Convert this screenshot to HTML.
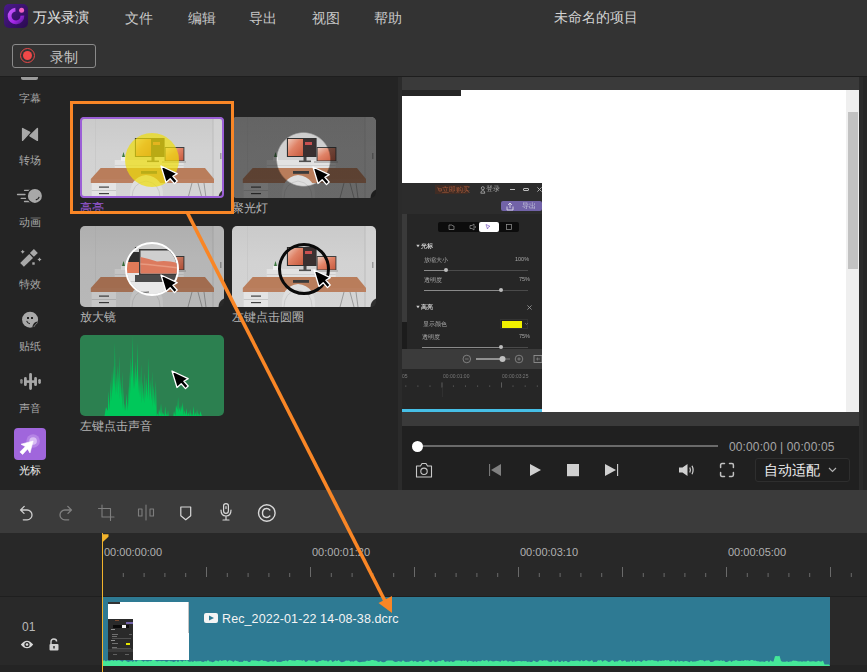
<!DOCTYPE html>
<html><head><meta charset="utf-8">
<style>
*{margin:0;padding:0;box-sizing:border-box}
html,body{width:867px;height:672px;overflow:hidden;background:#242424;font-family:"Liberation Sans",sans-serif}
.a{position:absolute}
.t{position:absolute;white-space:nowrap;line-height:1}
</style></head><body>
<!-- title bar -->
<div class="a" style="left:0;top:0;width:867px;height:76px;background:#333333"></div>
<div class="a" style="left:0;top:76px;width:867px;height:1px;background:#1e1e1e"></div>
<!-- logo -->
<div class="a" style="left:4px;top:4px;width:24px;height:24px;border-radius:5px;background:linear-gradient(135deg,#4a1a8a,#2a0a50)"></div>
<svg class="a" style="left:4px;top:4px" width="24" height="24" viewBox="0 0 24 24">
<defs><linearGradient id="lg" x1="0" y1="0" x2="1" y2="1"><stop offset="0" stop-color="#c45cfa"/><stop offset="0.65" stop-color="#a324e6"/><stop offset="1" stop-color="#5e1c9c"/></linearGradient></defs>
<path d="M11.44 5.62 A6.4 6.4 0 1 0 18.4 11.6" fill="none" stroke="url(#lg)" stroke-width="3.8"/>
<circle cx="17.6" cy="6.3" r="2.5" fill="#f062c0"/>
</svg>
<div class="t" style="left:33px;top:10px;font-size:14px;color:#e6e6e6">万兴录演</div>
<div class="t" style="left:125px;top:11px;font-size:14px;color:#c8c8c8">文件</div>
<div class="t" style="left:188px;top:11px;font-size:14px;color:#c8c8c8">编辑</div>
<div class="t" style="left:249px;top:11px;font-size:14px;color:#c8c8c8">导出</div>
<div class="t" style="left:312px;top:11px;font-size:14px;color:#c8c8c8">视图</div>
<div class="t" style="left:374px;top:11px;font-size:14px;color:#c8c8c8">帮助</div>
<div class="t" style="left:554px;top:10px;font-size:14px;color:#d2d2d2">未命名的项目</div>
<!-- record btn -->
<div class="a" style="left:12px;top:44px;width:84px;height:24px;border:1px solid #8a8a8a;border-radius:3px"></div>
<div class="a" style="left:19.8px;top:48.3px;width:15px;height:15px;border-radius:50%;border:1.3px solid #e84848"></div>
<div class="a" style="left:22.6px;top:51.1px;width:9.4px;height:9.4px;border-radius:50%;background:#f04848"></div>
<div class="t" style="left:50px;top:50px;font-size:14px;color:#c8c8c8">录制</div>


<!-- left panel -->
<div class="a" style="left:0;top:77px;width:398px;height:413px;background:#242424"></div>
<div class="a" style="left:398px;top:77px;width:4px;height:413px;background:#2b2b2b"></div>
<!-- sidebar -->
<div class="a" style="left:21px;top:77px;width:17px;height:3px;border-radius:0 0 2px 2px;background:#9a9a9a"></div>
<div class="t" style="left:19px;top:93px;font-size:11px;color:#a8a8a8">字幕</div>
<svg class="a" style="left:14px;top:120px" width="32" height="26" viewBox="0 0 32 26">
<g fill="#a8a8a8" stroke="#a8a8a8" stroke-width="1.4" stroke-linejoin="round">
<path d="M8.6 8.6 L8.6 20.4 L15.8 12.4Z"/><path d="M23.4 8.6 L23.4 20.4 L16 15.8Z"/>
</g></svg>
<div class="t" style="left:19px;top:155px;font-size:11px;color:#a8a8a8">转场</div>
<svg class="a" style="left:14px;top:182px" width="32" height="26" viewBox="0 0 32 26">
<g stroke="#a8a8a8" stroke-width="1.3" stroke-linecap="round">
<path d="M10.5 8.3 H17.5 M3.5 12.5 H11 M7.2 16.4 H11.5 M10.5 19.5 H17.5"/></g>
<circle cx="20.9" cy="13.9" r="8.2" fill="#242424"/>
<circle cx="20.9" cy="13.9" r="7" fill="#a8a8a8"/>
<path d="M25.2 14.8 Q24.6 17.2 21.8 17.8" stroke="#242424" stroke-width="1.2" fill="none"/>
</svg>
<div class="t" style="left:19px;top:217px;font-size:11px;color:#a8a8a8">动画</div>
<svg class="a" style="left:14px;top:244px" width="32" height="26" viewBox="0 0 32 26">
<g fill="#a8a8a8">
<path d="M6.2 19 L15.3 9.9 L19 13.9 L9.9 22.8Z"/>
<path d="M15.9 9.1 L19.9 5 L23.8 9.1 L19.9 12.8Z"/>
<path d="M8.7 5.7 L9.5 7 L10.8 7.7 L9.5 8.4 L8.7 9.7 L7.9 8.4 L6.6 7.7 L7.9 7Z"/>
<path d="M25.5 13.5 L26.3 14.8 L27.6 15.5 L26.3 16.2 L25.5 17.5 L24.7 16.2 L23.4 15.5 L24.7 14.8Z"/>
<rect x="18.3" y="18.3" width="2.4" height="2.4"/>
</g></svg>
<div class="t" style="left:19px;top:279px;font-size:11px;color:#a8a8a8">特效</div>
<svg class="a" style="left:14px;top:306px" width="32" height="26" viewBox="0 0 32 26">
<circle cx="16.06" cy="13.7" r="8" fill="#a8a8a8"/>
<rect x="13" y="11" width="2" height="2" fill="#242424"/>
<rect x="17" y="11" width="2" height="2" fill="#242424"/>
<path d="M12.6 14.9 Q13.5 17.2 15.9 17.8" stroke="#242424" stroke-width="1.1" fill="none"/>
<path d="M23.6 15.6 Q19.3 16.2 18.3 20.8 L19.6 21.4 Q22.8 20.3 23.8 16.8Z" fill="#242424"/><path d="M23.6 16.6 Q21 18.5 19.8 21" stroke="#9a9a9a" stroke-width="0.7" fill="none"/>
</svg>
<div class="t" style="left:19px;top:341px;font-size:11px;color:#a8a8a8">贴纸</div>
<svg class="a" style="left:14px;top:368px" width="32" height="26" viewBox="0 0 32 26">
<g stroke="#a8a8a8" stroke-linecap="round">
<path d="M7.45 12.3 V14.6" stroke-width="2.5" stroke="#8a8a8a"/>
<path d="M11.4 10.4 V16.7 M16.55 6.3 V20.5 M21.55 10.4 V16.7" stroke-width="2.8"/>
<path d="M25.55 12.3 V14.6" stroke-width="2.6"/>
<path d="M11.5 13.6 H21.5" stroke-width="2.6" stroke-linecap="butt"/>
</g></svg>
<div class="t" style="left:19px;top:403px;font-size:11px;color:#a8a8a8">声音</div>
<div class="a" style="left:14px;top:428px;width:32px;height:32px;border-radius:4px;background:#a066dc"></div>
<svg class="a" style="left:14px;top:428px" width="32" height="32" viewBox="0 0 32 32">
<circle cx="19.1" cy="13" r="6.8" fill="#c9a2ef" opacity="0.5"/>
<circle cx="19.1" cy="13" r="3.8" fill="#e4d0f8" opacity="0.75"/>
<path d="M19.1 13 L7 16.2 L11.3 18.6 L5.9 23.9 L8.6 26.5 L13.6 21 L16 25Z" fill="#ffffff" stroke="#fff" stroke-width="0.6" stroke-linejoin="round"/>
</svg>
<div class="t" style="left:19px;top:465px;font-size:11px;color:#f0f0f0">光标</div>

<div class="a" style="left:80px;top:117px;width:144px;height:81px;border-radius:5px;overflow:hidden"><svg width="144" height="81" viewBox="0 0 144 81" style="position:absolute;left:0;top:0;filter:blur(0.3px)">
<defs><linearGradient id="wl1" x1="0" x2="0" y1="0" y2="1"><stop offset="0" stop-color="#cacaca"/><stop offset="0.45" stop-color="#d2d2d2"/><stop offset="1" stop-color="#d4d4d4"/></linearGradient>
<linearGradient id="scr1" x1="0" x2="1" y1="0" y2="1"><stop offset="0" stop-color="#eecabb"/><stop offset="0.45" stop-color="#e08266"/><stop offset="1" stop-color="#c85a3e"/></linearGradient></defs>
<rect width="144" height="81" fill="url(#wl1)"/>
<rect x="15" y="0" width="0.8" height="81" fill="#c0c0c0" opacity="0.6"/>
<rect x="133" y="0" width="11" height="81" fill="#d6d6d6" opacity="0.6"/>
<rect x="132.5" y="0" width="1" height="81" fill="#bcbcbc"/>
<rect x="140" y="36" width="1.5" height="6" fill="#9a9a9a"/>
<rect x="34.7" y="43" width="69" height="11" fill="#e2e2e2"/>
<rect x="34.7" y="48" width="69" height="1" fill="#cfcfcf"/>
<rect x="54.9" y="21" width="29.7" height="19" fill="#303030"/>
<rect x="56" y="22" width="15" height="17" fill="url(#scr1)"/>
<rect x="71" y="22" width="12.6" height="17" fill="#3a3030"/>
<rect x="73" y="25" width="7" height="3" fill="#c85050"/>
<rect x="71.5" y="40" width="3" height="4" fill="#454545"/>
<rect x="67" y="43.5" width="12" height="1.6" fill="#505050"/>
<rect x="84.6" y="30" width="19.8" height="14" fill="#404040"/>
<rect x="85.6" y="31" width="17.8" height="12.5" fill="url(#scr1)"/>
<rect x="82" y="44" width="24" height="2" fill="#b8b8b8"/>
<rect x="41" y="40" width="5" height="4" fill="#eeeeee"/>
<path d="M42 40 L43.5 35 L45 40Z" fill="#3d7a40"/>
<path d="M20.7 51 L125 51 L134 62 L10.8 62Z" fill="#b97d5b"/>
<rect x="10.8" y="62" width="123.2" height="4" fill="#bb8060"/>
<rect x="61" y="54" width="16" height="2.8" fill="#3a3a3a"/>
<rect x="11.7" y="66" width="24.3" height="15" fill="#e4e4e4"/>
<rect x="19" y="69.5" width="10" height="1.2" fill="#404040"/>
<rect x="19" y="76" width="10" height="1.2" fill="#404040"/>
<rect x="11.7" y="73" width="24.3" height="0.8" fill="#c0c0c0"/>
<path d="M50 81 Q49 60 66 58 Q84 60 83 81Z" fill="#dedede"/><path d="M52 81 Q52 66 66 64 Q80 66 80 81" fill="none" stroke="#c4c4c4" stroke-width="0.8"/>
<path d="M112 66 L108 81 M118 66 L122 81 M124 66 L126 81" stroke="#9a9a9a" stroke-width="1"/><path d="M138.5 81 Q138.5 75 144 72.5 V81Z" fill="#2e2e2e"/>
</svg><div class="a" style="left:45px;top:15.5px;width:54px;height:54px;border-radius:50%;background:rgba(240,222,10,0.7)"></div><svg class="a" style="left:79px;top:47px" width="22" height="23" viewBox="-2 -2 22 23">
<path transform="scale(1.0)" d="M0 0 L5 16.5 L9.2 12.8 L13.5 17.6 L16.2 15 L11.9 10.3 L16.2 7.6Z" fill="#000" stroke="#fff" stroke-width="1.3" stroke-linejoin="round"/></svg></div><div class="a" style="left:80px;top:117px;width:144px;height:81px;border:2px solid #9b5fd6;border-radius:4px"></div>
<div class="t" style="left:80px;top:202px;font-size:12px;color:#9a5ad8">高亮</div><div class="a" style="left:232px;top:117px;width:144px;height:81px;border-radius:5px;overflow:hidden"><svg width="144" height="81" viewBox="0 0 144 81" style="position:absolute;left:0;top:0;filter:blur(0.3px)">
<defs><linearGradient id="wl2" x1="0" x2="0" y1="0" y2="1"><stop offset="0" stop-color="#cacaca"/><stop offset="0.45" stop-color="#d2d2d2"/><stop offset="1" stop-color="#d4d4d4"/></linearGradient>
<linearGradient id="scr2" x1="0" x2="1" y1="0" y2="1"><stop offset="0" stop-color="#eecabb"/><stop offset="0.45" stop-color="#e08266"/><stop offset="1" stop-color="#c85a3e"/></linearGradient></defs>
<rect width="144" height="81" fill="url(#wl2)"/>
<rect x="15" y="0" width="0.8" height="81" fill="#c0c0c0" opacity="0.6"/>
<rect x="133" y="0" width="11" height="81" fill="#d6d6d6" opacity="0.6"/>
<rect x="132.5" y="0" width="1" height="81" fill="#bcbcbc"/>
<rect x="140" y="36" width="1.5" height="6" fill="#9a9a9a"/>
<rect x="34.7" y="43" width="69" height="11" fill="#e2e2e2"/>
<rect x="34.7" y="48" width="69" height="1" fill="#cfcfcf"/>
<rect x="54.9" y="21" width="29.7" height="19" fill="#303030"/>
<rect x="56" y="22" width="15" height="17" fill="url(#scr2)"/>
<rect x="71" y="22" width="12.6" height="17" fill="#3a3030"/>
<rect x="73" y="25" width="7" height="3" fill="#c85050"/>
<rect x="71.5" y="40" width="3" height="4" fill="#454545"/>
<rect x="67" y="43.5" width="12" height="1.6" fill="#505050"/>
<rect x="84.6" y="30" width="19.8" height="14" fill="#404040"/>
<rect x="85.6" y="31" width="17.8" height="12.5" fill="url(#scr2)"/>
<rect x="82" y="44" width="24" height="2" fill="#b8b8b8"/>
<rect x="41" y="40" width="5" height="4" fill="#eeeeee"/>
<path d="M42 40 L43.5 35 L45 40Z" fill="#3d7a40"/>
<path d="M20.7 51 L125 51 L134 62 L10.8 62Z" fill="#b97d5b"/>
<rect x="10.8" y="62" width="123.2" height="4" fill="#bb8060"/>
<rect x="61" y="54" width="16" height="2.8" fill="#3a3a3a"/>
<rect x="11.7" y="66" width="24.3" height="15" fill="#e4e4e4"/>
<rect x="19" y="69.5" width="10" height="1.2" fill="#404040"/>
<rect x="19" y="76" width="10" height="1.2" fill="#404040"/>
<rect x="11.7" y="73" width="24.3" height="0.8" fill="#c0c0c0"/>
<path d="M50 81 Q49 60 66 58 Q84 60 83 81Z" fill="#dedede"/><path d="M52 81 Q52 66 66 64 Q80 66 80 81" fill="none" stroke="#c4c4c4" stroke-width="0.8"/>
<path d="M112 66 L108 81 M118 66 L122 81 M124 66 L126 81" stroke="#9a9a9a" stroke-width="1"/><path d="M138.5 81 Q138.5 75 144 72.5 V81Z" fill="#2e2e2e"/>
</svg><div class="a" style="left:0;top:0;width:144px;height:81px;background:radial-gradient(circle 27px at 71.5px 42.4px, rgba(0,0,0,0) 26px, rgba(16,16,16,0.55) 27.5px)"></div><svg class="a" style="left:79px;top:48px" width="22" height="23" viewBox="-2 -2 22 23">
<path transform="scale(1.0)" d="M0 0 L5 16.5 L9.2 12.8 L13.5 17.6 L16.2 15 L11.9 10.3 L16.2 7.6Z" fill="#000" stroke="#fff" stroke-width="1.3" stroke-linejoin="round"/></svg></div>
<div class="t" style="left:232px;top:202px;font-size:12px;color:#b4b4b4">聚光灯</div><div class="a" style="left:80px;top:226px;width:144px;height:81px;border-radius:5px;overflow:hidden"><svg width="144" height="81" viewBox="0 0 144 81" style="position:absolute;left:0;top:0;filter:blur(0.3px)">
<defs><linearGradient id="wl3" x1="0" x2="0" y1="0" y2="1"><stop offset="0" stop-color="#cacaca"/><stop offset="0.45" stop-color="#d2d2d2"/><stop offset="1" stop-color="#d4d4d4"/></linearGradient>
<linearGradient id="scr3" x1="0" x2="1" y1="0" y2="1"><stop offset="0" stop-color="#eecabb"/><stop offset="0.45" stop-color="#e08266"/><stop offset="1" stop-color="#c85a3e"/></linearGradient></defs>
<rect width="144" height="81" fill="url(#wl3)"/>
<rect x="15" y="0" width="0.8" height="81" fill="#c0c0c0" opacity="0.6"/>
<rect x="133" y="0" width="11" height="81" fill="#d6d6d6" opacity="0.6"/>
<rect x="132.5" y="0" width="1" height="81" fill="#bcbcbc"/>
<rect x="140" y="36" width="1.5" height="6" fill="#9a9a9a"/>
<rect x="34.7" y="43" width="69" height="11" fill="#e2e2e2"/>
<rect x="34.7" y="48" width="69" height="1" fill="#cfcfcf"/>
<rect x="54.9" y="21" width="29.7" height="19" fill="#303030"/>
<rect x="56" y="22" width="15" height="17" fill="url(#scr3)"/>
<rect x="71" y="22" width="12.6" height="17" fill="#3a3030"/>
<rect x="73" y="25" width="7" height="3" fill="#c85050"/>
<rect x="71.5" y="40" width="3" height="4" fill="#454545"/>
<rect x="67" y="43.5" width="12" height="1.6" fill="#505050"/>
<rect x="84.6" y="30" width="19.8" height="14" fill="#404040"/>
<rect x="85.6" y="31" width="17.8" height="12.5" fill="url(#scr3)"/>
<rect x="82" y="44" width="24" height="2" fill="#b8b8b8"/>
<rect x="41" y="40" width="5" height="4" fill="#eeeeee"/>
<path d="M42 40 L43.5 35 L45 40Z" fill="#3d7a40"/>
<path d="M20.7 51 L125 51 L134 62 L10.8 62Z" fill="#b97d5b"/>
<rect x="10.8" y="62" width="123.2" height="4" fill="#bb8060"/>
<rect x="61" y="54" width="16" height="2.8" fill="#3a3a3a"/>
<rect x="11.7" y="66" width="24.3" height="15" fill="#e4e4e4"/>
<rect x="19" y="69.5" width="10" height="1.2" fill="#404040"/>
<rect x="19" y="76" width="10" height="1.2" fill="#404040"/>
<rect x="11.7" y="73" width="24.3" height="0.8" fill="#c0c0c0"/>
<path d="M50 81 Q49 60 66 58 Q84 60 83 81Z" fill="#dedede"/><path d="M52 81 Q52 66 66 64 Q80 66 80 81" fill="none" stroke="#c4c4c4" stroke-width="0.8"/>
<path d="M112 66 L108 81 M118 66 L122 81 M124 66 L126 81" stroke="#9a9a9a" stroke-width="1"/><path d="M138.5 81 Q138.5 75 144 72.5 V81Z" fill="#2e2e2e"/>
</svg><div class="a" style="left:0;top:0;width:144px;height:81px;background:rgba(0,0,0,0.13)"></div><div class="a" style="left:45px;top:15.7px;width:54px;height:54px;border-radius:50%;overflow:hidden;border:2px solid #fff;background:#cccccc"><svg class="a" style="left:-2px;top:-2px" width="54" height="54" viewBox="0 0 54 54"><rect x="0" y="10" width="14" height="10" fill="#2e2e2e"/><rect x="0" y="20" width="14" height="11" fill="#e07a58"/><rect x="0" y="31" width="14" height="8" fill="#e6e6e6"/><rect x="14" y="7" width="40" height="26" fill="#3a3a3a"/><rect x="15.5" y="8.5" width="38" height="23" fill="#cfcfcf"/><path d="M15.5 15 Q25 17 32 19.5 Q42 18 53.5 21 V31.5 H15.5Z" fill="#dc7a5e"/><path d="M15.5 22 Q30 23 53.5 26" stroke="#e89a80" stroke-width="1.5" fill="none"/><rect x="10" y="33" width="44" height="7" fill="#4a4a4a"/><rect x="0" y="40" width="54" height="14" fill="#e8e8e8"/><path d="M8 49 Q14 51 24 50" stroke="#555" stroke-width="1.2" fill="none"/><rect x="50" y="40" width="4" height="8" fill="#b98058"/></svg></div><svg class="a" style="left:79px;top:47px" width="22" height="23" viewBox="-2 -2 22 23">
<path transform="scale(1.0)" d="M0 0 L5 16.5 L9.2 12.8 L13.5 17.6 L16.2 15 L11.9 10.3 L16.2 7.6Z" fill="#000" stroke="#fff" stroke-width="1.3" stroke-linejoin="round"/></svg></div>
<div class="t" style="left:80px;top:311px;font-size:12px;color:#b4b4b4">放大镜</div><div class="a" style="left:232px;top:226px;width:144px;height:81px;border-radius:5px;overflow:hidden"><svg width="144" height="81" viewBox="0 0 144 81" style="position:absolute;left:0;top:0;filter:blur(0.3px)">
<defs><linearGradient id="wl4" x1="0" x2="0" y1="0" y2="1"><stop offset="0" stop-color="#cacaca"/><stop offset="0.45" stop-color="#d2d2d2"/><stop offset="1" stop-color="#d4d4d4"/></linearGradient>
<linearGradient id="scr4" x1="0" x2="1" y1="0" y2="1"><stop offset="0" stop-color="#eecabb"/><stop offset="0.45" stop-color="#e08266"/><stop offset="1" stop-color="#c85a3e"/></linearGradient></defs>
<rect width="144" height="81" fill="url(#wl4)"/>
<rect x="15" y="0" width="0.8" height="81" fill="#c0c0c0" opacity="0.6"/>
<rect x="133" y="0" width="11" height="81" fill="#d6d6d6" opacity="0.6"/>
<rect x="132.5" y="0" width="1" height="81" fill="#bcbcbc"/>
<rect x="140" y="36" width="1.5" height="6" fill="#9a9a9a"/>
<rect x="34.7" y="43" width="69" height="11" fill="#e2e2e2"/>
<rect x="34.7" y="48" width="69" height="1" fill="#cfcfcf"/>
<rect x="54.9" y="21" width="29.7" height="19" fill="#303030"/>
<rect x="56" y="22" width="15" height="17" fill="url(#scr4)"/>
<rect x="71" y="22" width="12.6" height="17" fill="#3a3030"/>
<rect x="73" y="25" width="7" height="3" fill="#c85050"/>
<rect x="71.5" y="40" width="3" height="4" fill="#454545"/>
<rect x="67" y="43.5" width="12" height="1.6" fill="#505050"/>
<rect x="84.6" y="30" width="19.8" height="14" fill="#404040"/>
<rect x="85.6" y="31" width="17.8" height="12.5" fill="url(#scr4)"/>
<rect x="82" y="44" width="24" height="2" fill="#b8b8b8"/>
<rect x="41" y="40" width="5" height="4" fill="#eeeeee"/>
<path d="M42 40 L43.5 35 L45 40Z" fill="#3d7a40"/>
<path d="M20.7 51 L125 51 L134 62 L10.8 62Z" fill="#b97d5b"/>
<rect x="10.8" y="62" width="123.2" height="4" fill="#bb8060"/>
<rect x="61" y="54" width="16" height="2.8" fill="#3a3a3a"/>
<rect x="11.7" y="66" width="24.3" height="15" fill="#e4e4e4"/>
<rect x="19" y="69.5" width="10" height="1.2" fill="#404040"/>
<rect x="19" y="76" width="10" height="1.2" fill="#404040"/>
<rect x="11.7" y="73" width="24.3" height="0.8" fill="#c0c0c0"/>
<path d="M50 81 Q49 60 66 58 Q84 60 83 81Z" fill="#dedede"/><path d="M52 81 Q52 66 66 64 Q80 66 80 81" fill="none" stroke="#c4c4c4" stroke-width="0.8"/>
<path d="M112 66 L108 81 M118 66 L122 81 M124 66 L126 81" stroke="#9a9a9a" stroke-width="1"/><path d="M138.5 81 Q138.5 75 144 72.5 V81Z" fill="#2e2e2e"/>
</svg><div class="a" style="left:45.8px;top:16.7px;width:52px;height:52px;border-radius:50%;border:3px solid #0a0a0a"></div><svg class="a" style="left:80px;top:41.5px" width="22" height="23" viewBox="-2 -2 22 23">
<path transform="scale(1.0)" d="M0 0 L5 16.5 L9.2 12.8 L13.5 17.6 L16.2 15 L11.9 10.3 L16.2 7.6Z" fill="#000" stroke="#fff" stroke-width="1.3" stroke-linejoin="round"/></svg></div>
<div class="t" style="left:232px;top:311px;font-size:12px;color:#b4b4b4">左键点击圆圈</div><div class="a" style="left:80px;top:335px;width:144px;height:81px;border-radius:5px;overflow:hidden"><div class="a" style="left:0;top:0;width:144px;height:81px;background:#2c8050"></div>
<svg class="a" style="left:0;top:0" width="144" height="81"><path d="M24.5 81 L25.3 76.0 L26.0 72.0 L27.8 76.0 L28.5 56.0 L29.8 76.0 L30.5 44.0 L31.3 66.0 L32.0 36.0 L32.8 58.0 L33.5 30.0 L34.2 52.0 L34.9 7.0 L35.6 60.0 L36.3 38.0 L37.1 60.0 L37.8 30.0 L38.5 52.0 L39.2 20.0 L39.9 64.0 L40.6 42.0 L41.5 64.0 L42.2 36.0 L42.8 74.0 L43.5 52.0 L44.0 76.0 L44.7 68.0 L45.6 76.0 L46.3 58.0 L47.6 76.0 L48.3 50.0 L48.9 72.0 L49.6 36.0 L50.1 58.0 L50.8 22.0 L51.9 44.0 L52.6 0.0 L53.3 54.0 L54.0 32.0 L54.9 54.0 L55.6 26.0 L56.8 48.0 L57.5 7.0 L58.3 58.0 L59.0 36.0 L59.3 62.0 L60.0 40.0 L60.4 62.0 L61.1 29.0 L61.9 68.0 L62.6 46.0 L64.1 68.0 L64.8 37.0 L65.8 64.0 L66.5 42.0 L67.7 64.0 L68.4 22.0 L69.3 66.0 L70.0 44.0 L71.4 66.0 L72.1 36.0 L72.9 72.0 L73.6 50.0 L75.1 72.0 L75.8 45.0 L76.8 81.0 L77.5 78.0 L78.3 81.0 L79.0 74.0 L80.3 79.0 L81.0 68.0 L81.9 81.0 L82.6 77.0 L84.5 81.0 L85.2 71.0 L86.1 81.0 L86.8 78.0 L87.3 81.0 L88.0 75.0 L88.7 81.0 L89.4 81.0 L91.3 81.0 L92.0 81.0 L93.3 81.0 L94.0 76.0 L95.3 81.0 L96.0 70.0 L97.4 75.0 L98.1 62.0 L98.8 77.0 L99.5 72.0 L100.3 77.0 L101.0 70.0 L102.0 75.0 L102.7 67.0 L103.8 80.0 L104.5 75.0 L105.7 80.0 L106.4 73.0 L107.5 81.0 L108.2 77.0 L109.4 81.0 L110.1 74.0 L111.1 81.0 L111.8 78.0 L112.7 81.0 L113.4 71.0 L114.5 81.0 L115.2 77.0 L116.3 81.0 L117.0 74.0 L118.0 81.0 L118.7 78.0 L119.6 81.0 L120.3 76.0 L121.9 81.0 L122.6 81.0 L123.5 81Z" fill="#00c85a"/></svg><svg class="a" style="left:89.5px;top:33.5px" width="22" height="23" viewBox="-2 -2 22 23">
<path transform="scale(1.0)" d="M0 0 L5 16.5 L9.2 12.8 L13.5 17.6 L16.2 15 L11.9 10.3 L16.2 7.6Z" fill="#000" stroke="#fff" stroke-width="1.3" stroke-linejoin="round"/></svg></div>
<div class="t" style="left:80px;top:420px;font-size:12px;color:#b4b4b4">左键点击声音</div>

<div class="a" style="left:402px;top:77px;width:457px;height:13px;background:#3a3a3a"></div>
<div class="a" style="left:859px;top:77px;width:8px;height:413px;background:#2b2b2b"></div><div class="a" style="left:863px;top:77px;width:4px;height:413px;background:#262626"></div>
<div class="a" style="left:402px;top:90px;width:457px;height:322px;background:#ffffff"></div>
<div class="a" style="left:402px;top:90px;width:59px;height:6px;background:#262626"></div>
<div class="a" style="left:846px;top:90px;width:13px;height:322px;background:#efefef"></div>
<div class="a" style="left:848px;top:112px;width:10px;height:157px;background:#c2c2c2"></div>
<div class="a" style="left:402px;top:412px;width:457px;height:14px;background:#3a3a3a"></div>
<!-- embedded window --><div class="a" style="left:0;top:0;width:867px;height:672px;filter:blur(0.35px)">
<div class="a" style="left:402px;top:183px;width:140px;height:31px;background:#2c2c2c"></div>
<div class="a" style="left:435px;top:185px;width:33px;height:9px;background:#402c24"></div>
<svg class="a" style="left:436.5px;top:186.5px" width="5" height="6"><path d="M0.3 0.8 H1.2 L2 4 H4.3 L4.7 1.8 H1.6" fill="none" stroke="#b0603c" stroke-width="0.6"/></svg><div class="t" style="left:442px;top:186.5px;font-size:6.5px;color:#a85a3a">立即购买</div>
<svg class="a" style="left:479.5px;top:186px" width="6" height="8"><circle cx="2.8" cy="2.2" r="1.5" fill="none" stroke="#b4b4b4" stroke-width="0.8"/><path d="M0.8 7.2 Q0.8 4.6 2.8 4.6 Q4.8 4.6 4.8 7.2Z" fill="none" stroke="#b4b4b4" stroke-width="0.8"/></svg>
<div class="t" style="left:486px;top:186px;font-size:6.5px;color:#a8a8a8">登录</div>
<div class="a" style="left:510px;top:188.5px;width:5px;height:1px;background:#bdbdbd"></div>
<div class="a" style="left:523px;top:187.5px;width:5.5px;height:3.5px;border:1px solid #bdbdbd;border-radius:1px"></div>
<svg class="a" style="left:536.5px;top:186.5px" width="5" height="5"><path d="M0.4 0.4 L4.6 4.6 M4.6 0.4 L0.4 4.6" stroke="#bdbdbd" stroke-width="0.9"/></svg>
<div class="a" style="left:501px;top:200.5px;width:40.5px;height:10.5px;background:#7263a8;border-radius:2px"></div>
<svg class="a" style="left:506px;top:201.5px" width="8" height="9"><path d="M4 6 V1 M2 3 L4 1 L6 3 M1 4.5 V8 H7 V4.5" fill="none" stroke="#e8e8f0" stroke-width="0.8"/></svg>
<div class="t" style="left:522px;top:202px;font-size:7px;color:#c8c8dc">导出</div>
<div class="a" style="left:402px;top:214px;width:140px;height:135px;background:#262626"></div>
<div class="a" style="left:402px;top:214px;width:5px;height:108px;background:#3a3a3a"></div>
<div class="a" style="left:402px;top:322px;width:5px;height:27px;background:#1c1c1c"></div>
<div class="a" style="left:438px;top:222px;width:81px;height:10px;background:#0c0c0c;border-radius:2px"></div>
<div class="a" style="left:479px;top:222px;width:20px;height:10px;background:#ffffff;border-radius:2px"></div>
<svg class="a" style="left:438px;top:222px" width="81" height="10">
<path d="M11 3 H14 L15 4 H16 V7.5 H11Z" fill="none" stroke="#9a9a9a" stroke-width="0.7"/>
<path d="M32 3.5 H34 L36 2 V8 L34 6.5 H32Z M37 4 Q38 5 37 6" fill="none" stroke="#9a9a9a" stroke-width="0.7"/>
<path d="M48 2.5 L52 4.3 L50.3 5 L49.5 7Z" fill="none" stroke="#8060c0" stroke-width="0.7"/>
<rect x="68.5" y="2.5" width="5" height="5" fill="none" stroke="#9a9a9a" stroke-width="0.7"/>
</svg>
<svg class="a" style="left:416px;top:244px" width="4" height="4"><path d="M0.3 0.8 H3.7 L2 3.3Z" fill="#cfcfcf"/></svg>
<div class="t" style="left:421px;top:243px;font-size:6px;color:#d0d0d0;font-weight:bold">光标</div>
<div class="t" style="left:424px;top:257px;font-size:6px;color:#a8a8a8">放缩大小</div>
<div class="t" style="left:515px;top:257px;font-size:5.5px;color:#a8a8a8">100%</div>
<div class="a" style="left:424px;top:269.5px;width:104px;height:1px;background:#4a4a4a"></div>
<div class="a" style="left:424px;top:269.5px;width:22px;height:1px;background:#8a8a8a"></div>
<div class="a" style="left:443.5px;top:267.8px;width:4.5px;height:4.5px;border-radius:50%;background:#bdbdbd"></div>
<div class="t" style="left:424px;top:277px;font-size:6px;color:#a8a8a8">透明度</div>
<div class="t" style="left:519px;top:277px;font-size:5.5px;color:#a8a8a8">75%</div>
<div class="a" style="left:424px;top:289.5px;width:104px;height:1px;background:#4a4a4a"></div>
<div class="a" style="left:424px;top:289.5px;width:77px;height:1px;background:#8a8a8a"></div>
<div class="a" style="left:498.8px;top:287.7px;width:4.5px;height:4.5px;border-radius:50%;background:#bdbdbd"></div>
<svg class="a" style="left:416px;top:305px" width="4" height="4"><path d="M0.3 0.8 H3.7 L2 3.3Z" fill="#cfcfcf"/></svg>
<div class="t" style="left:421px;top:304px;font-size:6px;color:#d0d0d0;font-weight:bold">高亮</div>
<svg class="a" style="left:527px;top:304.5px" width="5" height="5"><path d="M0.4 0.4 L4.6 4.6 M4.6 0.4 L0.4 4.6" stroke="#a0a0a0" stroke-width="0.8"/></svg>
<div class="t" style="left:423px;top:321px;font-size:6px;color:#a8a8a8">显示颜色</div>
<div class="a" style="left:500px;top:319px;width:28px;height:10px;border:0.5px solid #333"></div>
<div class="a" style="left:502px;top:320.5px;width:20px;height:7px;background:#f2f200"></div>
<svg class="a" style="left:524.5px;top:323px" width="3" height="2"><path d="M0 0 L1.5 1.5 L3 0" fill="none" stroke="#8a8a8a" stroke-width="0.6"/></svg>
<div class="t" style="left:422px;top:334px;font-size:6px;color:#a8a8a8">透明度</div>
<div class="t" style="left:519px;top:334px;font-size:5.5px;color:#a8a8a8">75%</div>
<div class="a" style="left:422px;top:346.5px;width:106px;height:1px;background:#4a4a4a"></div>
<div class="a" style="left:422px;top:346.5px;width:79px;height:1px;background:#8a8a8a"></div>
<div class="a" style="left:498.8px;top:344.7px;width:4.5px;height:4.5px;border-radius:50%;background:#bdbdbd"></div>
<div class="a" style="left:402px;top:349px;width:140px;height:20px;background:#3b3b3b"></div>
<svg class="a" style="left:460px;top:352px" width="82" height="14">
<circle cx="6.8" cy="7" r="3.8" fill="none" stroke="#9a9a9a" stroke-width="0.7"/><path d="M5 7 H8.6" stroke="#9a9a9a" stroke-width="0.6"/>
<path d="M16 7 H50" stroke="#7a7a7a" stroke-width="1"/><path d="M16 7 H42" stroke="#b8b8b8" stroke-width="1.2"/>
<circle cx="42.5" cy="7" r="3" fill="#c0c0c0"/>
<circle cx="59" cy="7" r="3.8" fill="none" stroke="#9a9a9a" stroke-width="0.7"/><path d="M57.2 7 H60.8 M59 5.2 V8.8" stroke="#9a9a9a" stroke-width="0.6"/>
<rect x="74" y="3.5" width="8" height="7" fill="none" stroke="#9a9a9a" stroke-width="0.8"/><path d="M76 7 H80 M77.5 5.5 V8.5" stroke="#8a8a8a" stroke-width="0.6"/>
</svg>
<div class="a" style="left:402px;top:369px;width:140px;height:43px;background:#262626"></div>
<div class="t" style="left:402px;top:374px;font-size:5px;color:#7a7a7a">05</div>
<div class="t" style="left:443px;top:374px;font-size:5px;color:#7a7a7a">00:00:01:00</div>
<div class="t" style="left:502px;top:374px;font-size:5px;color:#7a7a7a">00:00:03:25</div>
<svg class="a" style="left:402px;top:382px" width="140" height="16">
<path d="M3.8 3.3 V5 M15.9 3.3 V5 M28 3.3 V5 M51.4 3.3 V5 M63.5 3.3 V5 M75.6 3.3 V5 M87.7 3.3 V5 M111 3.3 V5 M123.2 3.3 V5 M135.3 3.3 V5" stroke="#5a5a5a" stroke-width="0.8"/>
<path d="M40 0.4 V5.6 M99.5 0.4 V5.6" stroke="#6a6a6a" stroke-width="0.8"/>
<path d="M40.6 5.6 V15" stroke="#3a3a3a" stroke-width="0.6"/>
</svg>
<div class="a" style="left:402px;top:409px;width:139.5px;height:3px;background:#46bfe6"></div>
</div>


<div class="a" style="left:402px;top:426px;width:457px;height:64px;background:#202020"></div>
<div class="a" style="left:417px;top:445px;width:301px;height:2px;background:#6a6a6a"></div>
<div class="a" style="left:411.5px;top:440.5px;width:11px;height:11px;border-radius:50%;background:#ffffff"></div>
<div class="t" style="left:729px;top:441px;font-size:12px;letter-spacing:0.12px;color:#a6a6a6">00:00:00 | 00:00:05</div>
<svg class="a" style="left:414px;top:461px" width="20" height="18" viewBox="0 0 20 18">
<path d="M2.5 5 H6.5 L8 2.5 H12 L13.5 5 H17.5 V16 H2.5Z" fill="none" stroke="#c8c8c8" stroke-width="1.1" stroke-linejoin="round"/>
<circle cx="10" cy="10.3" r="3.2" fill="none" stroke="#c8c8c8" stroke-width="1.1"/>
</svg>
<svg class="a" style="left:486px;top:462px" width="136" height="16" viewBox="0 0 136 16">
<path d="M3.6 2 V14" stroke="#808080" stroke-width="1"/>
<path d="M15 2 V14 L5 8Z" fill="#808080"/>
<path d="M44 2 L55 8 L44 14Z" fill="#d0d0d0"/>
<rect x="81" y="2" width="12" height="12.2" fill="#d0d0d0"/>
<path d="M119 2 L130 8 L119 14Z" fill="#d0d0d0"/>
<path d="M131.6 2 V14" stroke="#d0d0d0" stroke-width="1.1"/>
</svg>
<svg class="a" style="left:677px;top:462px" width="20" height="16" viewBox="0 0 20 16">
<path d="M2 5.5 H5.5 L10.5 2 V14 L5.5 10.5 H2Z" fill="#d0d0d0"/>
<path d="M12.8 5.5 Q14 8 12.8 10.5 M15 3.8 Q17.2 8 15 12.2" fill="none" stroke="#d0d0d0" stroke-width="1.2"/>
</svg>
<svg class="a" style="left:719px;top:462px" width="16" height="16" viewBox="0 0 16 16">
<path d="M1.6 5.5 V3 Q1.6 1.6 3 1.6 H5.5 M10.5 1.6 H13 Q14.4 1.6 14.4 3 V5.5 M14.4 10.5 V13 Q14.4 14.4 13 14.4 H10.5 M5.5 14.4 H3 Q1.6 14.4 1.6 13 V10.5" fill="none" stroke="#c0c0c0" stroke-width="1.5" stroke-linecap="round"/>
</svg>
<div class="a" style="left:755px;top:458px;width:95px;height:24px;border:1px solid #2e2e2e;border-radius:3px;background:#1e1e1e"></div>
<div class="t" style="left:764px;top:463px;font-size:14px;color:#f0f0f0">自动适配</div>
<svg class="a" style="left:828px;top:467px" width="9" height="6"><path d="M1 1 L4.5 4.5 L8 1" fill="none" stroke="#b0b0b0" stroke-width="1.2"/></svg>

<div class="a" style="left:0;top:490px;width:867px;height:43px;background:#3b3b3b"></div>
<svg class="a" style="left:0;top:490px" width="290" height="43" viewBox="0 0 290 43">
<g fill="none" stroke-linecap="round" stroke-linejoin="round" stroke-width="1.4">
<path d="M24.2 16.4 L20.6 20 L24 23.4 M20.8 20 H27.1 A4.9 4.9 0 0 1 27.1 29.8 H23.3" stroke="#cfcfcf" stroke-width="1.3"/>
<path d="M67.8 16.4 L71.4 20 L68 23.4 M71.2 20 H64.9 A4.9 4.9 0 0 0 64.9 29.8 H68.7" stroke="#808080" stroke-width="1.3"/>
<path d="M102 15 V27 H114 M98.5 18.5 H110.5 V30.5" stroke="#7e7e7e" stroke-width="1.1"/>
<path d="M146 15 V30 M138.5 19 H142 V26 H138.5Z M150 19 H153.5 V26 H150Z" stroke="#7e7e7e" stroke-width="1.1"/>
<path d="M180.8 17 H190.7 V25.8 L185.75 29.8 L180.8 25.8Z" stroke="#d8d8d8" stroke-width="1.2"/>
<path d="M223.6 15.8 Q223.6 13.6 226 13.6 Q228.4 13.6 228.4 15.8 V21 Q228.4 23.3 226 23.3 Q223.6 23.3 223.6 21Z M226 16.5 V18.5 M221 20 Q221 26 226 26 Q231 26 231 20 M226 26 V30 M223 30 H229" stroke="#d8d8d8" stroke-width="1.2"/>
<circle cx="266.8" cy="23" r="8.3" stroke="#d8d8d8"/>
<path d="M269.8 20 Q268.5 18.5 266.8 18.5 Q262.5 18.5 262.5 23 Q262.5 27.5 266.8 27.5 Q268.5 27.5 269.8 26" stroke="#d8d8d8"/>
</g>
</svg>
<div class="a" style="left:0;top:533px;width:867px;height:63px;background:#282828"></div>
<div class="a" style="left:0;top:596px;width:867px;height:1px;background:#1f1f1f"></div>
<div class="a" style="left:0;top:597px;width:867px;height:68px;background:#292929"></div>
<div class="a" style="left:0;top:665px;width:867px;height:7px;background:#242424"></div>
<div class="t" style="left:104px;top:547px;font-size:11px;color:#b0b0b0">00:00:00:00</div>
<div class="t" style="left:312px;top:547px;font-size:11px;color:#b0b0b0">00:00:01:20</div>
<div class="t" style="left:520px;top:547px;font-size:11px;color:#b0b0b0">00:00:03:10</div>
<div class="t" style="left:728px;top:547px;font-size:11px;color:#b0b0b0">00:00:05:00</div>
<svg class="a" style="left:0;top:0" width="867" height="672"><path d="M123.3 573 V577 M144.1 573 V577 M164.9 573 V577 M185.7 573 V577 M206.5 567 V577 M227.3 573 V577 M248.1 573 V577 M268.9 573 V577 M289.7 573 V577 M310.5 567 V577 M331.3 573 V577 M352.1 573 V577 M372.9 573 V577 M393.7 573 V577 M414.5 567 V577 M435.3 573 V577 M456.1 573 V577 M476.9 573 V577 M497.7 573 V577 M518.5 567 V577 M539.3 573 V577 M560.1 573 V577 M580.9 573 V577 M601.7 573 V577 M622.5 567 V577 M643.3 573 V577 M664.1 573 V577 M684.9 573 V577 M705.7 573 V577 M726.5 567 V577 M747.3 573 V577 M768.1 573 V577 M788.9 573 V577 M809.7 573 V577 M830.5 567 V577 M851.3 573 V577 " stroke="#6a6a6a" stroke-width="1"/></svg>
<div class="t" style="left:22px;top:621px;font-size:12px;color:#b8b8b8">01</div>
<svg class="a" style="left:20px;top:639px" width="14" height="11" viewBox="0 0 14 11">
<path d="M0.8 5.5 Q7 -2.2 13.2 5.5 Q7 13.2 0.8 5.5Z" fill="#d8d8d8"/><circle cx="7" cy="5.5" r="2.6" fill="#292929"/><circle cx="7" cy="5.5" r="1.3" fill="#e0e0e0"/>
</svg>
<svg class="a" style="left:48px;top:638px" width="12" height="13" viewBox="0 0 12 13">
<path d="M3 6 V3.8 Q3 1 5.8 1 Q8.6 1 8.6 3.5" fill="none" stroke="#d0d0d0" stroke-width="1.4"/>
<rect x="1.5" y="6" width="9" height="6.5" rx="1" fill="#d0d0d0"/><rect x="5.3" y="8" width="1.4" height="2.5" fill="#292929"/>
</svg>
<div class="a" style="left:103px;top:597px;width:727px;height:69px;background:#2e7a93"></div>
<div class="a" style="left:108px;top:602px;width:81px;height:58px;background:#ffffff"></div>
<div class="a" style="left:0;top:0;width:867px;height:672px;filter:blur(0.3px)">
<div class="a" style="left:108px;top:602px;width:12px;height:2px;background:#333"></div>
<div class="a" style="left:187.5px;top:602px;width:1.8px;height:31px;background:#c4c4c4"></div>
<div class="a" style="left:108px;top:618.8px;width:25px;height:41px;background:#2a2a2a"></div>
<div class="a" style="left:115px;top:619.6px;width:4px;height:1.2px;background:#7a4a30"></div>
<div class="a" style="left:126.4px;top:621.5px;width:6.7px;height:2.8px;background:#7263a8"></div>
<div class="a" style="left:113px;top:625.4px;width:16px;height:2.3px;background:#0a0a0a"></div>
<div class="a" style="left:121.8px;top:625.4px;width:3.9px;height:2.3px;background:#f0f0f0"></div>
<div class="a" style="left:111px;top:629.2px;width:4px;height:1px;background:#909090"></div>
<div class="a" style="left:112px;top:633.8px;width:6px;height:0.8px;background:#707070"></div>
<div class="a" style="left:129px;top:633.8px;width:3px;height:0.8px;background:#606060"></div>
<div class="a" style="left:112px;top:636.2px;width:5px;height:0.8px;background:#707070"></div>
<div class="a" style="left:112px;top:637.8px;width:19px;height:0.5px;background:#505050"></div>
<div class="a" style="left:111px;top:640.1px;width:4px;height:1px;background:#909090"></div>
<div class="a" style="left:112px;top:643px;width:6px;height:0.8px;background:#707070"></div>
<div class="a" style="left:125.7px;top:642.7px;width:3.9px;height:1.9px;background:#e6e600"></div>
<div class="a" style="left:112px;top:646.5px;width:5px;height:0.8px;background:#707070"></div>
<div class="a" style="left:112px;top:648px;width:19px;height:0.5px;background:#505050"></div>
<div class="a" style="left:108px;top:648.7px;width:25px;height:3.3px;background:#3a3a3a"></div>
<div class="a" style="left:113px;top:654px;width:4px;height:0.6px;background:#606060"></div>
<div class="a" style="left:125px;top:654px;width:4px;height:0.6px;background:#606060"></div>
</div>
<svg class="a" style="left:103px;top:646px" width="727" height="20"><path d="M0 20 L0 14 L0.0 14.7 L1.5 14.3 L3.0 15.4 L4.5 14.2 L6.0 15.2 L7.5 14.8 L9.0 14.1 L10.5 15.1 L12.0 14.1 L13.5 15.0 L15.0 14.2 L16.5 14.2 L18.0 14.9 L19.5 15.8 L21.0 14.3 L22.5 14.5 L24.0 15.4 L25.5 16.1 L27.0 15.3 L28.5 14.9 L30.0 16.1 L31.5 14.1 L33.0 15.9 L34.5 14.6 L36.0 14.3 L37.5 14.3 L39.0 14.7 L40.5 15.8 L42.0 14.4 L43.5 15.3 L45.0 15.4 L46.5 14.8 L48.0 15.2 L49.5 14.1 L51.0 14.1 L52.5 14.5 L54.0 15.5 L55.5 14.9 L57.0 14.7 L58.5 15.3 L60.0 15.0 L61.5 14.7 L63.0 15.7 L64.5 15.5 L66.0 14.5 L67.5 15.3 L69.0 15.2 L70.5 15.9 L72.0 15.6 L73.5 14.6 L75.0 16.2 L76.5 14.3 L78.0 14.9 L79.5 15.7 L81.0 14.3 L82.5 15.1 L84.0 14.1 L85.5 15.5 L87.0 15.7 L88.5 15.3 L90.0 15.9 L91.5 14.7 L93.0 15.5 L94.5 15.3 L96.0 15.3 L97.5 15.0 L99.0 15.8 L100.5 16.1 L102.0 15.0 L103.5 15.5 L105.0 14.1 L106.5 15.5 L108.0 15.4 L109.5 16.2 L111.0 15.8 L112.5 14.6 L114.0 14.8 L115.5 15.5 L117.0 14.0 L118.5 15.0 L120.0 14.4 L121.5 14.3 L123.0 14.1 L124.5 15.7 L126.0 14.3 L127.5 14.5 L129.0 14.9 L130.5 15.9 L132.0 14.2 L133.5 15.0 L135.0 15.2 L136.5 15.9 L138.0 15.8 L139.5 15.9 L141.0 14.6 L142.5 14.9 L144.0 14.8 L145.5 15.9 L147.0 16.1 L148.5 14.3 L150.0 14.4 L151.5 14.5 L153.0 14.5 L154.5 15.1 L156.0 15.3 L157.5 14.6 L159.0 14.0 L160.5 14.9 L162.0 14.8 L163.5 15.2 L165.0 16.1 L166.5 15.5 L168.0 15.1 L169.5 15.4 L171.0 15.5 L172.5 14.1 L174.0 16.0 L175.5 15.7 L177.0 15.9 L178.5 15.8 L180.0 14.9 L181.5 14.9 L183.0 14.2 L184.5 15.4 L186.0 14.1 L187.5 14.1 L189.0 14.5 L190.5 14.4 L192.0 14.7 L193.5 14.1 L195.0 14.0 L196.5 14.3 L198.0 14.2 L199.5 14.8 L201.0 14.1 L202.5 15.9 L204.0 15.4 L205.5 14.3 L207.0 14.6 L208.5 14.8 L210.0 14.8 L211.5 14.3 L213.0 15.9 L214.5 16.2 L216.0 15.0 L217.5 15.1 L219.0 14.2 L220.5 14.2 L222.0 14.8 L223.5 14.6 L225.0 15.8 L226.5 14.4 L228.0 14.1 L229.5 16.1 L231.0 15.2 L232.5 14.3 L234.0 15.2 L235.5 14.1 L237.0 15.2 L238.5 16.2 L240.0 15.9 L241.5 15.5 L243.0 14.6 L244.5 14.8 L246.0 14.4 L247.5 15.7 L249.0 15.2 L250.5 15.7 L252.0 14.7 L253.5 14.5 L255.0 15.8 L256.5 16.2 L258.0 15.9 L259.5 15.8 L261.0 15.8 L262.5 15.6 L264.0 14.5 L265.5 15.1 L267.0 14.8 L268.5 14.1 L270.0 14.1 L271.5 14.6 L273.0 14.6 L274.5 15.5 L276.0 16.1 L277.5 15.0 L279.0 16.1 L280.5 16.2 L282.0 16.1 L283.5 14.8 L285.0 14.5 L286.5 14.5 L288.0 14.4 L289.5 14.4 L291.0 15.4 L292.5 16.0 L294.0 15.8 L295.5 15.1 L297.0 15.4 L298.5 15.8 L300.0 14.2 L301.5 15.5 L303.0 16.0 L304.5 15.7 L306.0 15.7 L307.5 15.1 L309.0 14.4 L310.5 15.7 L312.0 14.7 L313.5 15.8 L315.0 16.1 L316.5 14.9 L318.0 14.9 L319.5 16.1 L321.0 15.6 L322.5 14.4 L324.0 14.3 L325.5 14.3 L327.0 16.0 L328.5 15.8 L330.0 14.3 L331.5 15.8 L333.0 16.2 L334.5 15.4 L336.0 14.8 L337.5 15.2 L339.0 14.3 L340.5 14.0 L342.0 16.1 L343.5 15.4 L345.0 15.2 L346.5 16.1 L348.0 15.0 L349.5 15.9 L351.0 15.8 L352.5 14.5 L354.0 14.6 L355.5 14.6 L357.0 14.5 L358.5 15.3 L360.0 14.6 L361.5 14.9 L363.0 14.3 L364.5 16.0 L366.0 14.8 L367.5 15.0 L369.0 15.3 L370.5 16.0 L372.0 14.9 L373.5 16.0 L375.0 15.1 L376.5 15.2 L378.0 15.2 L379.5 14.0 L381.0 15.0 L382.5 14.4 L384.0 14.0 L385.5 15.8 L387.0 14.4 L388.5 15.0 L390.0 15.6 L391.5 15.2 L393.0 14.7 L394.5 15.1 L396.0 15.2 L397.5 15.7 L399.0 14.2 L400.5 15.2 L402.0 14.5 L403.5 14.6 L405.0 15.7 L406.5 15.1 L408.0 15.2 L409.5 15.7 L411.0 16.0 L412.5 15.0 L414.0 15.3 L415.5 15.1 L417.0 15.1 L418.5 15.5 L420.0 15.0 L421.5 15.2 L423.0 15.1 L424.5 16.1 L426.0 15.5 L427.5 15.9 L429.0 16.1 L430.5 14.6 L432.0 15.2 L433.5 16.1 L435.0 15.8 L436.5 14.3 L438.0 14.3 L439.5 15.0 L441.0 14.2 L442.5 14.5 L444.0 14.2 L445.5 15.5 L447.0 15.7 L448.5 16.0 L450.0 14.3 L451.5 15.6 L453.0 15.5 L454.5 14.3 L456.0 15.9 L457.5 16.1 L459.0 14.5 L460.5 16.1 L462.0 14.9 L463.5 15.1 L465.0 16.2 L466.5 15.8 L468.0 14.4 L469.5 14.9 L471.0 15.1 L472.5 14.7 L474.0 14.4 L475.5 14.7 L477.0 15.6 L478.5 14.0 L480.0 15.2 L481.5 15.0 L483.0 14.0 L484.5 14.7 L486.0 15.4 L487.5 15.1 L489.0 14.1 L490.5 16.2 L492.0 15.7 L493.5 16.1 L495.0 14.2 L496.5 14.6 L498.0 14.1 L499.5 15.7 L501.0 14.6 L502.5 14.3 L504.0 14.9 L505.5 16.0 L507.0 15.8 L508.5 14.6 L510.0 14.3 L511.5 16.0 L513.0 15.3 L514.5 15.5 L516.0 14.2 L517.5 14.1 L519.0 15.5 L520.5 14.9 L522.0 14.2 L523.5 16.1 L525.0 15.4 L526.5 15.8 L528.0 14.2 L529.5 15.9 L531.0 14.1 L532.5 15.9 L534.0 15.0 L535.5 14.7 L537.0 15.2 L538.5 16.0 L540.0 14.6 L541.5 14.3 L543.0 15.2 L544.5 14.5 L546.0 14.2 L547.5 14.4 L549.0 14.1 L550.5 14.4 L552.0 14.7 L553.5 14.7 L555.0 15.7 L556.5 14.6 L558.0 15.1 L559.5 14.4 L561.0 14.8 L562.5 14.0 L564.0 14.6 L565.5 14.0 L567.0 15.6 L568.5 15.2 L570.0 14.4 L571.5 15.0 L573.0 16.1 L574.5 14.2 L576.0 15.8 L577.5 15.0 L579.0 15.1 L580.5 15.8 L582.0 14.9 L583.5 15.1 L585.0 15.5 L586.5 16.2 L588.0 14.8 L589.5 15.8 L591.0 15.6 L592.5 15.4 L594.0 14.9 L595.5 14.8 L597.0 14.1 L598.5 14.3 L600.0 14.2 L601.5 15.6 L603.0 14.6 L604.5 14.4 L606.0 14.2 L607.5 15.9 L609.0 15.9 L610.5 15.5 L612.0 14.6 L613.5 14.5 L615.0 14.6 L616.5 15.0 L618.0 14.3 L619.5 15.0 L621.0 14.6 L622.5 16.1 L624.0 16.1 L625.5 15.2 L627.0 14.5 L628.5 16.1 L630.0 14.7 L631.5 14.8 L633.0 14.0 L634.5 14.8 L636.0 15.0 L637.5 15.1 L639.0 14.4 L640.5 15.1 L642.0 14.0 L643.5 14.6 L645.0 14.2 L646.5 14.9 L648.0 14.1 L649.5 14.0 L651.0 14.7 L652.5 14.5 L654.0 15.3 L655.5 15.2 L657.0 15.7 L658.5 15.4 L660.0 15.6 L661.5 15.9 L663.0 14.9 L664.5 14.7 L666.0 16.2 L667.5 14.3 L669.0 15.6 L670.5 15.4 L672.0 10.3 L673.5 9.9 L675.0 10.2 L676.5 9.8 L678.0 15.1 L679.5 15.8 L681.0 15.8 L682.5 15.8 L684.0 15.3 L685.5 16.0 L687.0 15.5 L688.5 15.5 L690.0 14.5 L691.5 14.7 L693.0 14.7 L694.5 15.3 L696.0 15.4 L697.5 15.2 L699.0 15.7 L700.5 15.3 L702.0 15.5 L703.5 15.6 L705.0 14.6 L706.5 15.6 L708.0 15.6 L709.5 15.2 L711.0 15.2 L712.5 15.7 L714.0 15.5 L715.5 14.7 L717.0 15.6 L718.5 15.4 L720.0 14.6 L721.5 18.5 L723.0 18.5 L724.5 18.5 L726.0 18.5 L727 20Z" fill="#45e898"/></svg>
<svg class="a" style="left:204px;top:613px" width="14" height="10" viewBox="0 0 14 10"><rect x="0" y="0" width="14" height="10" rx="2" fill="#f4f4f4"/><path d="M5 2.5 L10 5 L5 7.5Z" fill="#2e7a93"/></svg>
<div class="t" style="left:222px;top:613px;font-size:12.5px;letter-spacing:0.1px;color:#f4f4f4">Rec_2022-01-22 14-08-38.dcrc</div>
<div class="a" style="left:102px;top:533px;width:1px;height:139px;background:#f2b32c"></div>
<svg class="a" style="left:101.5px;top:533px" width="8" height="11"><path d="M0.5 1.3 H6.5 V3.8 L0.5 9.2Z" fill="#f2b32c"/></svg>

<div class="a" style="left:70px;top:101px;width:164px;height:113px;border:3px solid #f98626"></div>
<svg class="a" style="left:0;top:0" width="867" height="672">
<line x1="187" y1="212" x2="386" y2="603" stroke="#f98626" stroke-width="3.6"/>
<path d="M392 613 L378.5 603 L392 596Z" fill="#f98626"/>
</svg>
</body></html>
